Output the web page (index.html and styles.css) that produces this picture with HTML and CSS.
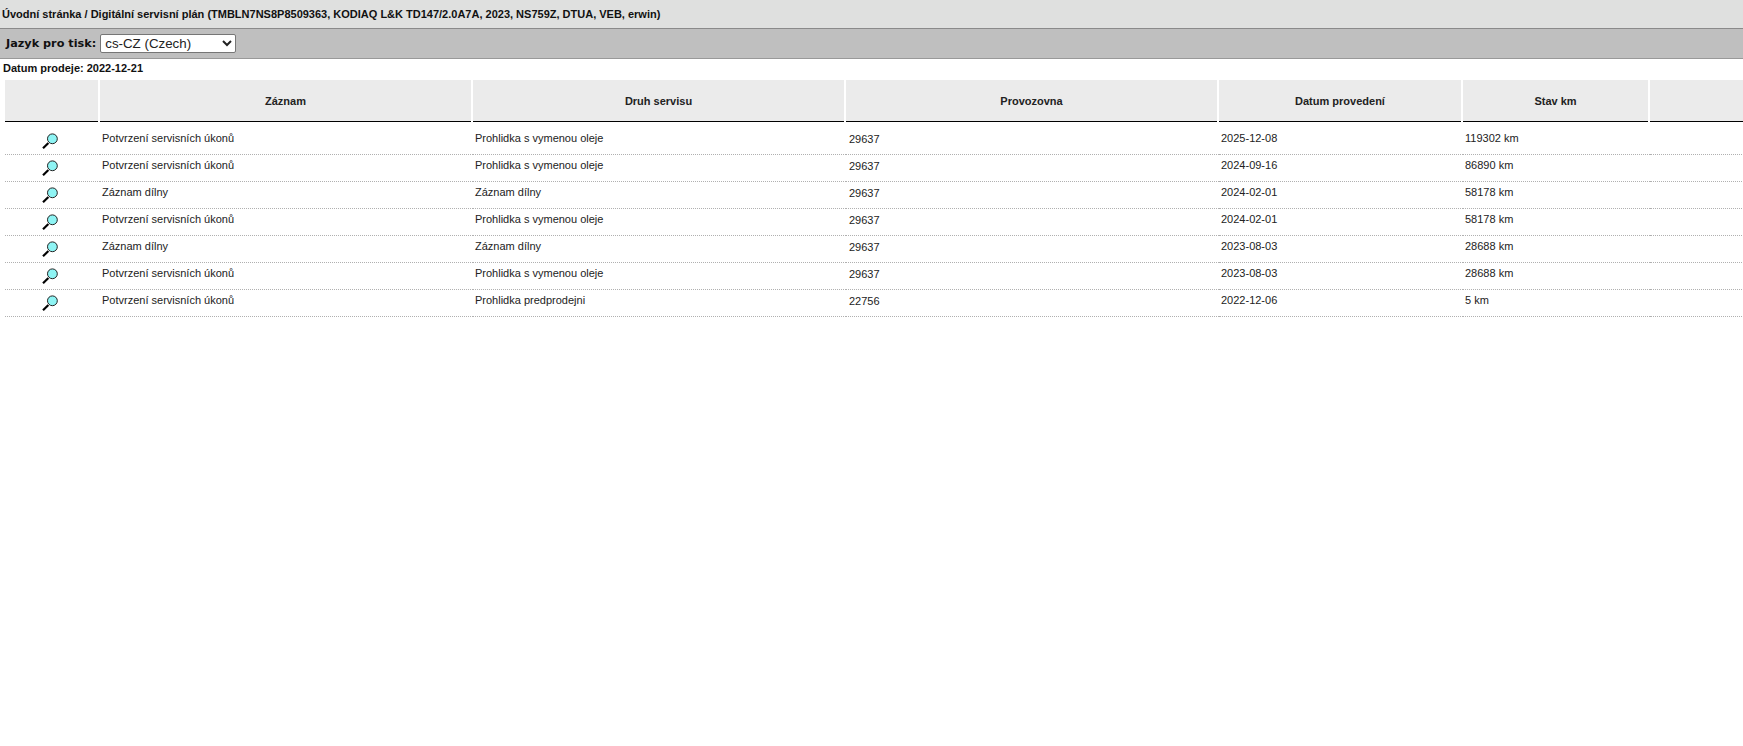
FILE: index.html
```html
<!DOCTYPE html>
<html lang="cs">
<head>
<meta charset="utf-8">
<title>Digitální servisní plán</title>
<link rel="stylesheet" href="styles.css">
</head>
<body>
<svg class="defs" width="0" height="0" aria-hidden="true"><defs>
<symbol id="lens" viewBox="0 0 16 16">
<path d="M1 15.2 6.4 10" stroke="#000" stroke-width="2.2" fill="none"/>
<circle cx="10.4" cy="5.8" r="4.9" fill="#8ef4f4" stroke="#222" stroke-width="1"/>
</symbol>
</defs></svg>
<header class="crumbs">Úvodní stránka / Digitální servisní plán (TMBLN7NS8P8509363, KODIAQ L&amp;K TD147/2.0A7A, 2023, NS759Z, DTUA, VEB, erwin)</header>
<form class="toolbar">
<label class="toolbar-label" for="lang">Jazyk pro tisk:</label>
<select id="lang" class="lang"><option>cs-CZ (Czech)</option></select>
</form>
<p class="sale">Datum prodeje: 2022-12-21</p>
<div class="wrap">
<table class="grid">
<colgroup><col class="c0"><col class="c1"><col class="c2"><col class="c3"><col class="c4"><col class="c5"><col class="c6"></colgroup>
<thead><tr><th><div class="head"></div></th><th><div class="head">Záznam</div></th><th><div class="head">Druh servisu</div></th><th><div class="head">Provozovna</div></th><th><div class="head">Datum provedení</div></th><th><div class="head">Stav km</div></th><th><div class="head"></div></th></tr></thead>
<tbody>
<tr><td class="ic"><svg class="lens"><use href="#lens"/></svg></td><td>Potvrzení servisních úkonů</td><td>Prohlidka s vymenou oleje</td><td class="pv">29637</td><td>2025-12-08</td><td>119302 km</td><td></td></tr>
<tr><td class="ic"><svg class="lens"><use href="#lens"/></svg></td><td>Potvrzení servisních úkonů</td><td>Prohlidka s vymenou oleje</td><td class="pv">29637</td><td>2024-09-16</td><td>86890 km</td><td></td></tr>
<tr><td class="ic"><svg class="lens"><use href="#lens"/></svg></td><td>Záznam dílny</td><td>Záznam dílny</td><td class="pv">29637</td><td>2024-02-01</td><td>58178 km</td><td></td></tr>
<tr><td class="ic"><svg class="lens"><use href="#lens"/></svg></td><td>Potvrzení servisních úkonů</td><td>Prohlidka s vymenou oleje</td><td class="pv">29637</td><td>2024-02-01</td><td>58178 km</td><td></td></tr>
<tr><td class="ic"><svg class="lens"><use href="#lens"/></svg></td><td>Záznam dílny</td><td>Záznam dílny</td><td class="pv">29637</td><td>2023-08-03</td><td>28688 km</td><td></td></tr>
<tr><td class="ic"><svg class="lens"><use href="#lens"/></svg></td><td>Potvrzení servisních úkonů</td><td>Prohlidka s vymenou oleje</td><td class="pv">29637</td><td>2023-08-03</td><td>28688 km</td><td></td></tr>
<tr><td class="ic"><svg class="lens"><use href="#lens"/></svg></td><td>Potvrzení servisních úkonů</td><td>Prohlidka predprodejni</td><td class="pv">22756</td><td>2022-12-06</td><td>5 km</td><td></td></tr>
</tbody>
</table>
</div>
</body>
</html>
```
FILE: styles.css
```css
html, body { margin: 0; padding: 0; background: #fff; overflow: hidden; }
body { font-family: "Liberation Sans", Arial, sans-serif; font-size: 11px; color: #222; }
.defs { display: block; height: 0; }
.crumbs { box-sizing: border-box; height: 29px; padding: 7px 0 0 2px; background: #dfe0df; border-bottom: 1px solid #8a8a8a; font-weight: bold; font-size: 11px; line-height: 14px; white-space: nowrap; color: #111; }
.toolbar { box-sizing: border-box; height: 30px; display: flex; align-items: center; gap: 4px; padding: 0 0 0 6px; background: #bfbfbf; border-bottom: 1px solid #999; }
.toolbar-label { font-family: "DejaVu Sans", Verdana, sans-serif; font-weight: bold; font-size: 11.25px; color: #111; }
.lang { width: 136px; height: 19px; font-family: "Liberation Sans", Arial, sans-serif; font-size: 13.33px; background: #fff; border: 1px solid #767676; border-radius: 2px; padding: 0; color: #222; }
.sale { margin: 0; height: 21px; padding: 2px 0 0 3px; box-sizing: border-box; font-weight: bold; font-size: 11px; line-height: 14px; color: #111; }
.wrap { width: 1743px; overflow: hidden; }
.grid { border-collapse: separate; border-spacing: 0; table-layout: fixed; width: 1797px; margin-left: 5px; }
.c0 { width: 95px; } .c1, .c2, .c3 { width: 373px; } .c4 { width: 244px; } .c5 { width: 187px; } .c6 { width: 152px; }
th { padding: 0 2px 0 0; }
.head { box-sizing: border-box; height: 42px; display: flex; align-items: center; justify-content: center; background: #ebebeb; border-bottom: 1px solid #000; font-size: 11px; font-weight: bold; color: #222; }
td { height: 27px; box-sizing: border-box; padding: 0 2px 6px; border-bottom: 1px dotted #b0b0b0; font-size: 11px; line-height: 14px; white-space: nowrap; }
td.pv { padding: 0 2px 5px 3px; }
td.ic { text-align: center; padding: 0 5px 1px 0; }
tbody tr:first-child td { height: 33px; padding-top: 4px; padding-bottom: 4px; }
tbody tr:first-child td.pv { padding-top: 4px; padding-bottom: 2px; }
tbody tr:first-child td.ic { padding-top: 6px; padding-bottom: 0; }
.lens { display: inline-block; width: 16px; height: 16px; vertical-align: middle; }
```
